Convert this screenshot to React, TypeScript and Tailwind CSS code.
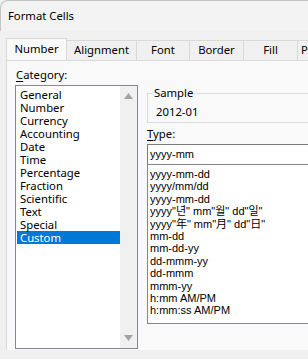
import React from "react";

const categories = [
  "General",
  "Number",
  "Currency",
  "Accounting",
  "Date",
  "Time",
  "Percentage",
  "Fraction",
  "Scientific",
  "Text",
  "Special",
  "Custom",
];

const types = [
  "yyyy-mm-dd",
  "yyyy/mm/dd",
  "yyyy-mm-dd",
  'yyyy"년" mm"월" dd"일"',
  'yyyy"年" mm"月" dd"日"',
  "mm-dd",
  "mm-dd-yy",
  "dd-mmm-yy",
  "dd-mmm",
  "mmm-yy",
  "h:mm AM/PM",
  "h:mm:ss AM/PM",
];

const tabs = [
  { name: "Number", w: "w-[61px]" },
  { name: "Alignment", w: "w-[71px]" },
  { name: "Font", w: "w-[54px]" },
  { name: "Border", w: "w-[55px]" },
  { name: "Fill", w: "w-[55px]" },
];

const ui = { fontFamily: '"Noto Sans", "Open Sans", sans-serif' };
const tahoma = {
  fontFamily: '"Liberation Sans", "Noto Sans CJK KR", "Noto Sans CJK JP", sans-serif',
};

export default function App() {
  return (
    <div
      className="w-[308px] h-[359px] overflow-hidden bg-[#f0f0f0] text-black"
      style={ui}
    >
      {/* Title bar */}
      <div className="h-[31px] bg-[#f3f3f3] border-t border-l border-[#c4c4c4] rounded-tl-[8px] flex items-center pl-[7px] text-[11.3px]">
        Format Cells
      </div>

      {/* Tabs */}
      <div className="h-[29px] flex items-end pl-[6px] text-[11.3px]">
        {tabs.map((t, i) => (
          <div
            key={t.name}
            className={`${t.w} shrink-0 flex items-center justify-center border border-b-0 border-[#d9d9d9] ${
              i === 0 ? "h-[22px] bg-[#f9f9f9]" : "h-[20px] bg-[#f0f0f0] -ml-px"
            }`}
          >
            {t.name}
          </div>
        ))}
        <div className="w-[70px] shrink-0 h-[20px] -ml-px flex items-center pl-[3px] border border-b-0 border-[#d9d9d9] whitespace-nowrap overflow-hidden">
          Protection
        </div>
      </div>

      {/* Panel */}
      <div className="ml-[6px] h-[290px] bg-[#f9f9f9] border-t border-l border-[#d9d9d9] flex">
        {/* Category */}
        <div className="pl-[8px] w-[131px] shrink-0">
          <div className="mt-[7px] h-[14px] leading-[14px] text-[11.3px] pl-px">
            <span className="underline underline-offset-2">C</span>ategory:
          </div>
          <div className="mt-[3px] h-[264px] border border-[#828790] bg-white flex">
            <div className="flex-1 pt-[2px] pl-px">
              {categories.map((c) => (
                <div
                  key={c}
                  className={`h-[13px] leading-[13px] text-[11.3px] pl-[3px] ${
                    c === "Custom" ? "bg-[#0078d7] text-white" : ""
                  }`}
                >
                  {c}
                </div>
              ))}
            </div>
            <div className="w-[17px] bg-[#f0f0f0] flex flex-col items-center justify-between py-[7px]">
              <svg width="9" height="6" viewBox="0 0 9 6">
                <path d="M0 6 L4.5 0 L9 6 Z" fill="#a3a3a3" />
              </svg>
              <svg width="9" height="6" viewBox="0 0 9 6">
                <path d="M0 0 L4.5 6 L9 0 Z" fill="#a3a3a3" />
              </svg>
            </div>
          </div>
        </div>

        {/* Right side */}
        <div className="flex-1 pl-[9px] min-w-0">
          <div className="relative mt-[32px] h-[30px] border border-[#dcdcdc] w-[200px]">
            <span className="absolute -top-[8px] left-[5px] bg-[#f9f9f9] px-px text-[11.3px] leading-[14px]">
              Sample
            </span>
            <div className="pt-[11px] pl-[8px] text-[11.3px] leading-[14px]">2012-01</div>
          </div>

          <div className="mt-[4px] h-[14px] leading-[14px] text-[11.3px]">
            <span className="underline underline-offset-2">T</span>ype:
          </div>

          <div
            className="mt-[3px] h-[21px] border border-[#7a7a7a] bg-white w-[200px] flex items-center pl-[2px] text-[11px]"
            style={tahoma}
          >
            yyyy-mm
          </div>
          <div
            className="-mt-px h-[160px] border border-[#828790] bg-white w-[200px] pt-[3px] pl-[2px] text-[11px]"
            style={tahoma}
          >
            {types.map((t, i) => (
              <div key={i} className="h-[12.4px] leading-[12.4px] whitespace-nowrap">
                {t}
              </div>
            ))}
          </div>
        </div>
      </div>
    </div>
  );
}
